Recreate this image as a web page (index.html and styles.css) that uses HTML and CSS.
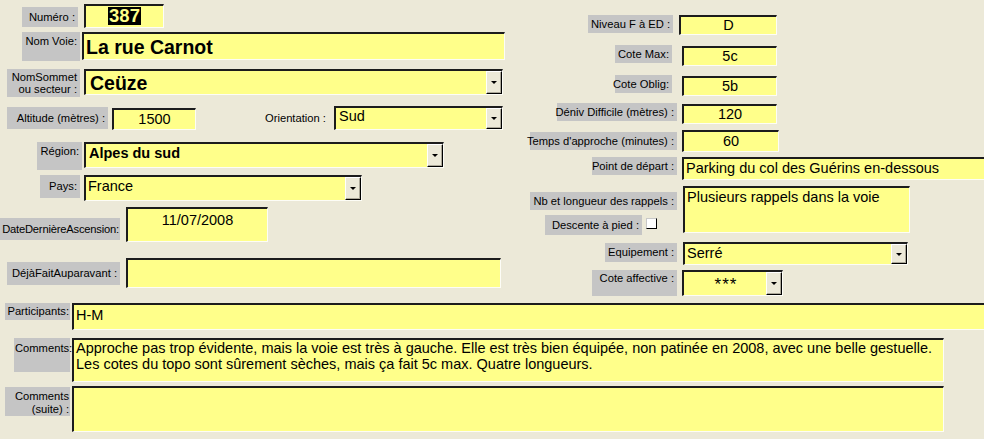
FILE: index.html
```html
<!DOCTYPE html>
<html lang="fr">
<head>
    <meta charset="UTF-8">
    <meta name="viewport" content="width=device-width, initial-scale=1.0">
    <link rel="stylesheet" href="styles.css">
</head>
<body>
    <div class="form">
        <div class="top">

            <!-- Left column -->
            <div class="left">
                <div class="row r1">
                    <div class="lbl l-num mid">Numéro :</div>
                    <div class="fld f-num"><span class="sel">387</span></div>
                </div>
                <div class="row r2">
                    <div class="lbl l-voie">Nom Voie:</div>
                    <div class="fld f-voie big">La rue Carnot</div>
                </div>
                <div class="row r3">
                    <div class="lbl l-sommet mid">NomSommet<br>ou secteur :</div>
                    <div class="fld combo f-sommet"><span class="val big">Ceüze</span><span class="btn"><i class="tri"></i></span></div>
                </div>
                <div class="row r4">
                    <div class="lbl l-alt mid">Altitude (mètres) :</div>
                    <div class="fld f-alt center">1500</div>
                    <div class="plain l-orient">Orientation :</div>
                    <div class="fld combo f-orient"><span class="val">Sud</span><span class="btn"><i class="tri"></i></span></div>
                </div>
                <div class="row r5">
                    <div class="lbl l-region">Région:</div>
                    <div class="fld combo f-region"><span class="val bold">Alpes du sud</span><span class="btn"><i class="tri"></i></span></div>
                </div>
                <div class="row r6">
                    <div class="lbl l-pays mid">Pays:</div>
                    <div class="fld combo f-pays"><span class="val">France</span><span class="btn"><i class="tri"></i></span></div>
                </div>
                <div class="row r7">
                    <div class="lbl l-date mid">DateDernièreAscension:</div>
                    <div class="fld f-date center">11/07/2008</div>
                </div>
                <div class="row r8">
                    <div class="lbl l-deja mid">DéjàFaitAuparavant :</div>
                    <div class="fld f-deja"></div>
                </div>
            </div>

            <!-- Right column -->
            <div class="right">
                <div class="rrow ra">
                    <div class="rwrap"><div class="lbl mid w85 mr5">Niveau F à ED :</div></div>
                    <div class="fld center fa">D</div>
                </div>
                <div class="rrow rb">
                    <div class="rwrap"><div class="lbl mid w57 mr6">Cote Max:</div></div>
                    <div class="fld center fb">5c</div>
                </div>
                <div class="rrow rc">
                    <div class="rwrap"><div class="lbl mid w57 mr6">Cote Oblig:</div></div>
                    <div class="fld center fb">5b</div>
                </div>
                <div class="rrow rd">
                    <div class="rwrap"><div class="lbl mid w120 mr1">Déniv Difficile (mètres) :</div></div>
                    <div class="fld center fb">120</div>
                </div>
                <div class="rrow re">
                    <div class="rwrap"><div class="lbl mid w147 mr1 lt2">Temps d'approche (minutes) :</div></div>
                    <div class="fld center fe">60</div>
                </div>
                <div class="rrow rf">
                    <div class="rwrap"><div class="lbl mid w85 mr1">Point de départ :</div></div>
                    <div class="fld ff">Parking du col des Guérins en-dessous</div>
                </div>
                <div class="rrow rg">
                    <div class="rwrap col">
                        <div class="lbl mid w147 mr1 lt6">Nb et longueur des rappels :</div>
                        <div class="desc">
                            <div class="lbl mid w97">Descente à pied :</div>
                            <span class="check"></span>
                        </div>
                    </div>
                    <div class="fld fg">Plusieurs rappels dans la voie</div>
                </div>
                <div class="rrow rh">
                    <div class="rwrap"><div class="lbl mid w72 mr1 lt1">Equipement :</div></div>
                    <div class="fld combo fh"><span class="val">Serré</span><span class="btn"><i class="tri"></i></span></div>
                </div>
                <div class="rrow ri">
                    <div class="rwrap"><div class="lbl w85 mr1 tall">Cote affective :</div></div>
                    <div class="fld combo fi"><span class="val center stars">***</span><span class="btn"><i class="tri"></i></span></div>
                </div>
            </div>
        </div>

        <!-- Bottom rows -->
        <div class="bottom">
            <div class="row b1">
                <div class="lbl l-part">Participants:</div>
                <div class="fld f-part">H-M</div>
            </div>
            <div class="row b2">
                <div class="lbl l-comm">Comments:</div>
                <div class="fld f-comm">Approche pas trop évidente, mais la voie est très à gauche. Elle est très bien équipée, non patinée en 2008, avec une belle gestuelle.<br>Les cotes du topo sont sûrement sèches, mais ça fait 5c max. Quatre longueurs.</div>
            </div>
            <div class="row b3">
                <div class="lbl l-suite">Comments<br>(suite) :</div>
                <div class="fld f-suite"></div>
            </div>
        </div>
    </div>
</body>
</html>
```

FILE: styles.css
```css
body {
    margin: 0;
    padding: 0;
    background-color: #ece9d8;
    font-family: "Liberation Sans", Arial, sans-serif;
    overflow: hidden;
    width: 984px;
    height: 439px;
}

.form {
    width: 984px;
    height: 439px;
    overflow: hidden;
}

.top {
    display: flex;
    height: 303px;
}

.left {
    width: 520px;
    flex: none;
}

.right {
    flex: 1;
    padding-top: 15px;
}

.row {
    display: flex;
    align-items: flex-start;
}

/* Labels */
.lbl {
    background-color: #c5c5c5;
    font-size: 11.2px;
    line-height: 13px;
    color: #000;
    text-align: right;
    white-space: nowrap;
    padding: 3px 3px 0 1px;
    box-sizing: border-box;
    flex: none;
}

.lbl.mid {
    display: flex;
    align-items: center;
    justify-content: flex-end;
    padding-top: 0;
}

.plain {
    font-size: 11.2px;
    line-height: 13px;
    white-space: nowrap;
    flex: none;
}

/* Fields */
.fld {
    background-color: #ffff8a;
    border-top: 2px solid #1c1c1c;
    border-left: 2px solid #1c1c1c;
    border-right: 1px solid #fdfdf6;
    border-bottom: 1px solid #fdfdf6;
    box-sizing: border-box;
    font-size: 14.5px;
    line-height: 17px;
    padding: 0 2px;
    flex: none;
    overflow: hidden;
    white-space: nowrap;
}

.center {
    text-align: center;
}

.big {
    font-size: 19.5px;
    font-weight: bold;
    line-height: 24px;
}

.bold {
    font-weight: bold;
    font-size: 14.5px;
}

.combo {
    display: flex;
    padding-right: 0;
}

.combo .val {
    flex: 1;
    overflow: hidden;
}

.btn {
    width: 16px;
    flex: none;
    align-self: stretch;
    background-color: #ece9d8;
    border-top: 1px solid #fff;
    border-left: 1px solid #fff;
    border-right: 1px solid #000;
    border-bottom: 1px solid #000;
    box-shadow: inset -1px -1px 0 #aca899;
    box-sizing: border-box;
    display: flex;
    align-items: center;
    justify-content: center;
}

.tri {
    width: 0;
    height: 0;
    border-left: 3px solid transparent;
    border-right: 3px solid transparent;
    border-top: 3px solid #000;
}

/* Left rows */
.r1 { height: 32px; }
.l-num { margin: 7px 0 0 22px; width: 56px; height: 20px; }
.f-num { margin: 4px 0 0 6px; width: 80px; height: 24px; text-align: center; padding-top: 1px; }
.sel {
    display: inline-block;
    background-color: #000;
    color: #ffff8a;
    font-weight: bold;
    font-size: 18.5px;
    line-height: 18px;
    padding: 0 1px;
}

.r2 { height: 37px; }
.l-voie { margin-left: 22px; width: 58px; height: 29px; }
.f-voie { margin-left: 2px; width: 423px; height: 28px; padding-top: 1px; }

.r3 { height: 37px; }
.l-sommet { margin-left: 7px; width: 73px; height: 28px; line-height: 12px; }
.f-sommet { margin-left: 4px; width: 419px; height: 26px; }
.f-sommet .val { padding-left: 2px; line-height: 24px; }

.r4 { height: 36px; }
.l-alt { margin: 1px 0 0 7px; width: 101px; height: 22px; }
.f-alt { margin: 2px 0 0 4px; width: 84px; height: 22px; padding-top: 1px; }
.l-orient { margin: 6px 0 0 69px; width: 67px; }
.f-orient { margin-left: 2px; width: 169px; height: 24px; }
.f-orient .val { padding-left: 1px; }

.r5 { height: 33px; }
.l-region { margin-left: 37px; width: 45px; height: 28px; }
.f-region { margin-left: 2px; width: 360px; height: 26px; }
.f-region .val { padding: 1px 0 0 1px; }

.r6 { height: 32px; }
.l-pays { margin-left: 40px; width: 40px; height: 23px; }
.f-pays { margin-left: 4px; width: 278px; height: 26px; }
.f-pays .val { padding-top: 1px; }

.r7 { height: 51px; }
.l-date { margin-top: 11px; width: 120px; height: 22px; padding-right: 1px; letter-spacing: -0.2px; }
.f-date { margin-left: 6px; width: 142px; height: 35px; padding-top: 3px; }

.r8 { height: 45px; }
.l-deja { margin: 4px 0 0 7px; width: 113px; height: 23px; }
.f-deja { margin-left: 6px; width: 375px; height: 30px; }

/* Right rows */
.rrow {
    display: flex;
    align-items: flex-start;
}

.rwrap {
    width: 158px;
    flex: none;
    display: flex;
    justify-content: flex-end;
}

.rwrap.col {
    flex-direction: column;
    align-items: flex-end;
}

.rrow .lbl { height: 18px; }

.w57 { width: 57px; }
.w72 { width: 72px; }
.w85 { width: 85px; }
.w97 { width: 97px; }
.w120 { width: 120px; }
.w147 { width: 147px; }
.mr1 { margin-right: 1px; }
.mr5 { margin-right: 5px; }
.mr6 { margin-right: 6px; }
.lt1 { margin-top: 1px; }
.lt2 { margin-top: 2px; }
.lt6 { margin-top: 6px; }

.ra { height: 30px; }
.fa { margin-left: 1px; width: 98px; height: 20px; }

.rb, .rc { height: 30px; }
.rc { height: 28px; }
.rd { height: 27px; }
.fb { margin: 1px 0 0 4px; width: 95px; height: 20px; }

.re { height: 27px; }
.fe { margin-left: 4px; width: 97px; height: 22px; padding-top: 1px; }

.rf { height: 29px; }
.ff { margin-left: 4px; width: 310px; height: 23px; padding-top: 1px; }

.rg { height: 56px; }
.desc {
    display: flex;
    align-items: flex-start;
    margin: 5px 21px 0 0;
}

.desc .lbl { height: 20px; }

.check {
    width: 11px;
    height: 11px;
    margin: 3px 0 0 4px;
    background-color: #fff;
    border-top: 1px solid #c8c8c8;
    border-left: 1px solid #c8c8c8;
    border-right: 1px solid #000;
    border-bottom: 1px solid #000;
    box-sizing: border-box;
}

.fg { margin-left: 5px; width: 227px; height: 47px; padding-top: 1px; }

.rh { height: 28px; }
.rh .lbl { height: 19px; }
.fh { margin-left: 5px; width: 225px; height: 23px; }
.fh .val { padding-top: 1px; }

.ri { height: 26px; }
.rrow .lbl.tall { height: 26px; padding-top: 2px; }
.fi { margin-left: 4px; width: 101px; height: 26px; }
.stars {
    font-size: 17px;
    font-weight: normal;
    line-height: 20px;
    letter-spacing: 1px;
    padding-top: 3px;
}

/* Bottom rows */
.b1 { height: 35px; }
.l-part { margin-left: 5px; width: 65px; height: 17px; padding-top: 2px; padding-right: 1px; }
.f-part { margin-left: 2px; width: 920px; height: 27px; padding-top: 2px; }

.b2 { height: 48px; }
.l-comm { margin-left: 14px; width: 56px; height: 34px; padding-top: 4px; padding-right: 1px; }
.f-comm { margin-left: 2px; width: 872px; height: 44px; line-height: 16px; padding-top: 0; }

.b3 { height: 53px; }
.l-suite { margin: 1px 0 0 5px; width: 65px; height: 29px; padding-top: 3px; padding-right: 1px; line-height: 13px; }
.f-suite { margin-left: 2px; width: 872px; height: 46px; }
```
